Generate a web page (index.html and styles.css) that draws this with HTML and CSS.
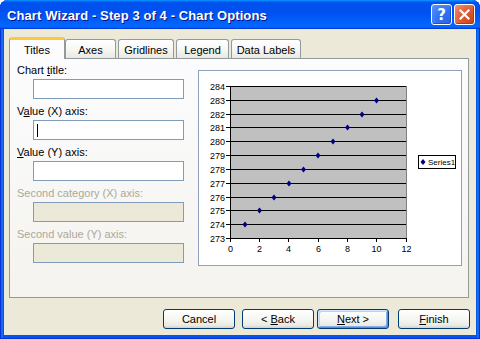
FILE: index.html
```html
<!DOCTYPE html>
<html lang="en">
<head>
  <meta charset="UTF-8">
  <title>Chart Wizard - Step 3 of 4 - Chart Options</title>
  <link rel="stylesheet" href="styles.css">
</head>
<body>
  <div class="window">
    <div class="titlebar">
      <span class="title">Chart Wizard - Step 3 of 4 - Chart Options</span>
      <div class="title-buttons">
        <div class="tb-btn help">?</div>
        <div class="tb-btn close">
          <svg width="11" height="11" viewBox="0 0 11 11">
            <path d="M1.5 1.5 L9.5 9.5 M9.5 1.5 L1.5 9.5" stroke="#fff" stroke-width="2.2" stroke-linecap="square"/>
          </svg>
        </div>
      </div>
    </div>

    <div class="content">
      <div class="tabs">
        <div class="tab active">Titles</div>
        <div class="tab tab-axes">Axes</div>
        <div class="tab tab-grid">Gridlines</div>
        <div class="tab tab-legend">Legend</div>
        <div class="tab tab-labels">Data Labels</div>
      </div>

      <div class="panel">
        <div class="fields">
          <div class="field-label">Chart <u>t</u>itle:</div>
          <div class="textbox"></div>
          <div class="field-label">V<u>a</u>lue (X) axis:</div>
          <div class="textbox"><span class="caret"></span></div>
          <div class="field-label"><u>V</u>alue (Y) axis:</div>
          <div class="textbox"></div>
          <div class="field-label disabled">Second category (X) axis:</div>
          <div class="textbox disabled"></div>
          <div class="field-label disabled">Second value (Y) axis:</div>
          <div class="textbox disabled"></div>
        </div>

        <div class="chart">
          <svg width="262" height="194" viewBox="0 0 262 194">
            <rect x="31" y="15" width="176" height="152" fill="#c0c0c0"/>
            <g stroke="#000" stroke-width="1">
              <path d="M31 15.5H207 M31 29.5H207 M31 43.5H207 M31 56.5H207 M31 70.5H207 M31 84.5H207 M31 98.5H207 M31 112.5H207 M31 126.5H207 M31 139.5H207 M31 153.5H207"/>
              <path d="M27 15.5H31 M27 29.5H31 M27 43.5H31 M27 56.5H31 M27 70.5H31 M27 84.5H31 M27 98.5H31 M27 112.5H31 M27 126.5H31 M27 139.5H31 M27 153.5H31 M27 167.5H31"/>
              <path d="M31.5 167V171 M60.5 167V171 M89.5 167V171 M119.5 167V171 M148.5 167V171 M177.5 167V171 M207.5 167V171"/>
              <path d="M31.5 15V168 M31 167.5H208"/>
            </g>
            <path d="M207.5 15V167" stroke="#808080"/>
            <g class="axis-text" text-anchor="end">
              <text x="26" y="18.5">284</text>
              <text x="26" y="32.5">283</text>
              <text x="26" y="46.5">282</text>
              <text x="26" y="59.5">281</text>
              <text x="26" y="73.5">280</text>
              <text x="26" y="87.5">279</text>
              <text x="26" y="101.5">278</text>
              <text x="26" y="115.5">277</text>
              <text x="26" y="129.5">276</text>
              <text x="26" y="142.5">275</text>
              <text x="26" y="156.5">274</text>
              <text x="26" y="170.5">273</text>
            </g>
            <g class="axis-text" text-anchor="middle">
              <text x="31.5" y="181">0</text>
              <text x="60.5" y="181">2</text>
              <text x="89.5" y="181">4</text>
              <text x="119.5" y="181">6</text>
              <text x="148.5" y="181">8</text>
              <text x="177.5" y="181">10</text>
              <text x="207.5" y="181">12</text>
            </g>
            <g fill="#000080">
              <path d="M46 150.5l2.5 3-2.5 3-2.5-3z"/>
              <path d="M60.5 136.5l2.5 3-2.5 3-2.5-3z"/>
              <path d="M75 123.5l2.5 3-2.5 3-2.5-3z"/>
              <path d="M90 109.5l2.5 3-2.5 3-2.5-3z"/>
              <path d="M104.5 95.5l2.5 3-2.5 3-2.5-3z"/>
              <path d="M119 81.5l2.5 3-2.5 3-2.5-3z"/>
              <path d="M134 67.5l2.5 3-2.5 3-2.5-3z"/>
              <path d="M148.5 53.5l2.5 3-2.5 3-2.5-3z"/>
              <path d="M163 40.5l2.5 3-2.5 3-2.5-3z"/>
              <path d="M177.5 26.5l2.5 3-2.5 3-2.5-3z"/>
            </g>
            <rect x="219.5" y="84.5" width="37" height="13" fill="#fff" stroke="#000"/>
            <path d="M224 88l2.5 3-2.5 3-2.5-3z" fill="#000080"/>
            <text class="legend-text" x="229" y="94">Series1</text>
          </svg>
        </div>
      </div>

      <div class="buttons">
        <div class="btn btn-cancel"><span>Cancel</span></div>
        <div class="btn btn-back"><span>&lt; <u>B</u>ack</span></div>
        <div class="btn btn-next default"><span><u>N</u>ext &gt;</span></div>
        <div class="btn"><span><u>F</u>inish</span></div>
      </div>
    </div>
  </div>
</body>
</html>
```

FILE: styles.css
```css
body {
  margin: 0;
  font-family: "Liberation Sans", Arial, sans-serif;
  font-size: 11px;
  background: #ffffff;
}
u {
  text-decoration: underline;
  text-underline-offset: 1px;
}
.window {
  width: 480px;
  height: 339px;
  box-sizing: border-box;
  padding: 0 4px 4px;
  display: flex;
  flex-direction: column;
  background: #0055ea;
  border-radius: 8px 8px 0 0;
  box-shadow: inset 1px 0 #0831d9, inset -1px 0 #0831d9, inset 0 -1px #0831d9, inset 3px 0 #166aee, inset -3px 0 #166aee;
}
.titlebar {
  height: 29px;
  margin: 0 -4px;
  padding: 0 5px 0 7px;
  display: flex;
  align-items: center;
  justify-content: space-between;
  border-radius: 8px 8px 0 0;
  background: linear-gradient(180deg, #0997ff 0, #0053ee 8%, #0050ee 40%, #0066ff 88%, #0066ff 93%, #005bff 95%, #003dd7 96%, #003dd7 100%);
}
.title {
  color: #ffffff;
  font-weight: bold;
  font-size: 13px;
  letter-spacing: 0.1px;
  text-shadow: 1px 1px #0f1089;
  padding-top: 1px;
}
.title-buttons {
  display: flex;
  gap: 2px;
}
.tb-btn {
  width: 21px;
  height: 21px;
  box-sizing: border-box;
  border: 1px solid #ffffff;
  border-radius: 3px;
  display: flex;
  align-items: center;
  justify-content: center;
}
.help {
  color: #ffffff;
  font-family: "DejaVu Sans", sans-serif;
  font-weight: bold;
  font-size: 15px;
  background: radial-gradient(circle at 85% 85%, #2a66ea 0, #2f71f0 45%, #5a97ff 100%);
  box-shadow: inset -1px -1px #1c4ecb;
}
.close {
  background: radial-gradient(circle at 90% 90%, #cc4418 0, #dd5a32 50%, #f29377 100%);
  box-shadow: inset -1px -1px #b03a14;
}
.content {
  flex: 1;
  background: #ece9d8;
  padding: 8px 0 0 5px;
}
.tabs {
  height: 21px;
  display: flex;
  align-items: flex-end;
  position: relative;
  z-index: 1;
}
.tab {
  height: 19px;
  box-sizing: border-box;
  border: 1px solid #919b9c;
  border-bottom: none;
  border-radius: 3px 3px 0 0;
  background: linear-gradient(180deg, #ffffff 0, #f7f7f4 50%, #e9e8e2 100%);
  display: flex;
  align-items: center;
  justify-content: center;
  padding-top: 1px;
  color: #000000;
}
.tab.active {
  width: 56px;
  height: 22px;
  margin-bottom: -1px;
  background: #fcfcfe;
  border-top: 3px solid #ffc83c;
  padding-top: 0;
}
.tab-axes { width: 51px; }
.tab-grid { width: 56px; margin-left: 2px; }
.tab-legend { width: 53px; margin-left: 2px; }
.tab-labels { width: 70px; margin-left: 2px; }
.panel {
  width: 460px;
  height: 240px;
  box-sizing: border-box;
  border: 1px solid #919b9c;
  background: linear-gradient(180deg, #fcfcfe 0, #f4f3ee 100%);
  display: flex;
}
.fields {
  width: 188px;
  box-sizing: border-box;
  padding: 5px 0 0 7px;
}
.field-label {
  height: 13px;
  line-height: 13px;
  margin-bottom: 2px;
  color: #000000;
}
.field-label.disabled {
  color: #aca899;
}
.textbox {
  width: 151px;
  height: 20px;
  box-sizing: border-box;
  margin: 0 0 6px 16px;
  border: 1px solid #7f9db9;
  background: #ffffff;
  display: flex;
}
.textbox.disabled {
  background: #ece9d8;
}
.caret {
  width: 1px;
  height: 13px;
  margin: 3px 0 0 3px;
  background: #000000;
}
.chart {
  width: 264px;
  height: 196px;
  margin-top: 11px;
  box-sizing: border-box;
  border: 1px solid #8ea2bb;
  background: #ffffff;
}
.chart svg {
  display: block;
}
.axis-text {
  font-family: "Liberation Sans", Arial, sans-serif;
  font-size: 9px;
  fill: #000000;
}
.legend-text {
  font-family: "Liberation Sans", Arial, sans-serif;
  font-size: 8px;
  fill: #000000;
}
.buttons {
  display: flex;
  justify-content: flex-end;
  margin-top: 11px;
  padding-right: 6px;
}
.btn {
  width: 72px;
  height: 20px;
  box-sizing: border-box;
  border: 1px solid #003c74;
  border-radius: 3px;
  background: linear-gradient(180deg, #ffffff 0, #f6f6f3 50%, #ebeae4 85%, #d6d0c5 100%);
  display: flex;
  align-items: center;
  justify-content: center;
  color: #000000;
}
.btn-cancel { margin-right: 7px; }
.btn-back { margin-right: 3px; }
.btn-next { margin-right: 9px; }
.btn.default {
  box-shadow: inset 1px 1px #cee7ff, inset -1px -1px #6982ee, inset 2px 2px #bcd4f6, inset -2px -2px #89ade4;
}
```
